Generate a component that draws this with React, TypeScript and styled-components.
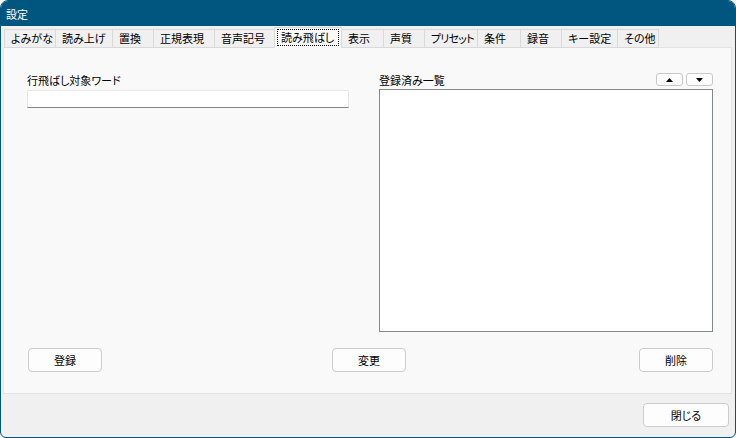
import React, { FC } from 'react';
import styled, { createGlobalStyle } from 'styled-components';

const GlobalStyle = createGlobalStyle`
  html, body {
    margin: 0;
    padding: 0;
    background: #ffffff;
  }
  body {
    font-family: "Noto Sans CJK JP", "Noto Sans", sans-serif;
    font-size: 11px;
    color: #000;
    font-feature-settings: "palt";
  }
  * {
    box-sizing: border-box;
  }
`;

const Window = styled.div`
  width: 736px;
  height: 438px;
  display: flex;
  flex-direction: column;
  border: 1px solid #00567e;
  border-radius: 8px 8px 6px 6px;
  overflow: hidden;
  background: #f0f0f0;
`;

const TitleBar = styled.div`
  height: 25px;
  flex: none;
  display: flex;
  align-items: center;
  padding-left: 5px;
  background: #00567e;
  color: #ffffff;
`;

const Body = styled.div`
  flex: 1;
  display: flex;
  flex-direction: column;
  padding: 0 3px 0 2px;
`;

const TabStrip = styled.div`
  height: 22px;
  display: flex;
  align-items: flex-end;
  padding-left: 2px;
  margin-bottom: -1px;
  position: relative;
  z-index: 1;
`;

const Tab = styled.div<{ $w: number; $active?: boolean; $tight?: boolean }>`
  width: ${(p) => p.$w}px;
  height: ${(p) => (p.$active ? 21 : 19)}px;
  display: flex;
  align-items: center;
  padding: ${(p) => (p.$active ? '0 2px' : '0 0 0 6px')};
  margin-left: -1px;
  border: 1px solid #d9d9d9;
  border-bottom-color: ${(p) => (p.$active ? '#f9f9f9' : '#d9d9d9')};
  background: ${(p) => (p.$active ? '#f9f9f9' : '#f0f0f0')};
  white-space: nowrap;
  overflow: hidden;
  letter-spacing: ${(p) => (p.$tight ? '-0.8px' : '0')};
  line-height: 1;
`;

const FocusRect = styled.span`
  flex: 1;
  height: 17px;
  display: flex;
  align-items: center;
  padding-left: 3px;
  border: 1px dotted #000;
`;

const Panel = styled.div`
  width: 729px;
  height: 347px;
  flex: none;
  display: flex;
  flex-direction: column;
  padding: 25px 18px 21px 23px;
  background: #f9f9f9;
  border: 1px solid #e3e3e3;
`;

const Columns = styled.div`
  flex: 1;
  display: flex;
  justify-content: space-between;
`;

const Column = styled.div<{ $w: number }>`
  width: ${(p) => p.$w}px;
  display: flex;
  flex-direction: column;
`;

const ColumnHead = styled.div`
  height: 16px;
  display: flex;
  align-items: flex-start;
  justify-content: space-between;
`;

const Label = styled.div`
  line-height: 15px;
`;

const TextInput = styled.div`
  height: 18px;
  margin-top: 1px;
  background: #ffffff;
  border: 1px solid #e6e6e6;
  border-bottom-color: #868686;
`;

const OrderButtons = styled.div`
  display: flex;
  gap: 3px;
`;

const SmallButton = styled.div`
  width: 27px;
  height: 13px;
  display: flex;
  align-items: center;
  justify-content: center;
  background: #fdfdfd;
  border: 1px solid #c8c8c8;
  border-radius: 3px;
`;

const ListBox = styled.div`
  height: 243px;
  background: #ffffff;
  border: 1px solid #828790;
`;

const ButtonRow = styled.div`
  display: flex;
  justify-content: space-between;
  padding-left: 1px;
`;

const Button = styled.div<{ $w?: number }>`
  width: ${(p) => p.$w ?? 74}px;
  height: 24px;
  display: flex;
  align-items: center;
  justify-content: center;
  background: #fdfdfd;
  border: 1px solid #cccccc;
  border-radius: 4px;
`;

const MiddleButton = styled(Button)`
  margin-left: -3px;
`;

const Footer = styled.div`
  flex: 1;
  display: flex;
  justify-content: flex-end;
  align-items: flex-start;
  padding: 9px 3px 0 0;
`;

const Triangle: FC<{ down?: boolean }> = ({ down }) => (
  <svg width="7" height="4" viewBox="0 0 7 4">
    <path d={down ? 'M0 0H7L3.5 4Z' : 'M0 4H7L3.5 0Z'} fill="#000" />
  </svg>
);

const tabs: { label: string; w: number; tight?: boolean }[] = [
  { label: 'よみがな', w: 52 },
  { label: '読み上げ', w: 58 },
  { label: '置換', w: 42 },
  { label: '正規表現', w: 62 },
  { label: '音声記号', w: 61 },
  { label: '読み飛ばし', w: 68 },
  { label: '表示', w: 43 },
  { label: '声質', w: 42 },
  { label: 'プリセット', w: 54, tight: true },
  { label: '条件', w: 44 },
  { label: '録音', w: 42 },
  { label: 'キー設定', w: 57 },
  { label: 'その他', w: 42 },
];

const ACTIVE = 5;

const App: FC = () => (
  <>
    <GlobalStyle />
    <Window>
      <TitleBar>設定</TitleBar>
      <Body>
        <TabStrip>
          {tabs.map((t, i) => (
            <Tab key={t.label} $w={t.w} $active={i === ACTIVE} $tight={t.tight}>
              {i === ACTIVE ? <FocusRect>{t.label}</FocusRect> : t.label}
            </Tab>
          ))}
        </TabStrip>
        <Panel>
          <Columns>
            <Column $w={322}>
              <ColumnHead>
                <Label>行飛ばし対象ワード</Label>
              </ColumnHead>
              <TextInput />
            </Column>
            <Column $w={334}>
              <ColumnHead>
                <Label>登録済み一覧</Label>
                <OrderButtons>
                  <SmallButton><Triangle /></SmallButton>
                  <SmallButton><Triangle down /></SmallButton>
                </OrderButtons>
              </ColumnHead>
              <ListBox />
            </Column>
          </Columns>
          <ButtonRow>
            <Button>登録</Button>
            <MiddleButton>変更</MiddleButton>
            <Button>削除</Button>
          </ButtonRow>
        </Panel>
        <Footer>
          <Button $w={86}>閉じる</Button>
        </Footer>
      </Body>
    </Window>
  </>
);

export default App;
